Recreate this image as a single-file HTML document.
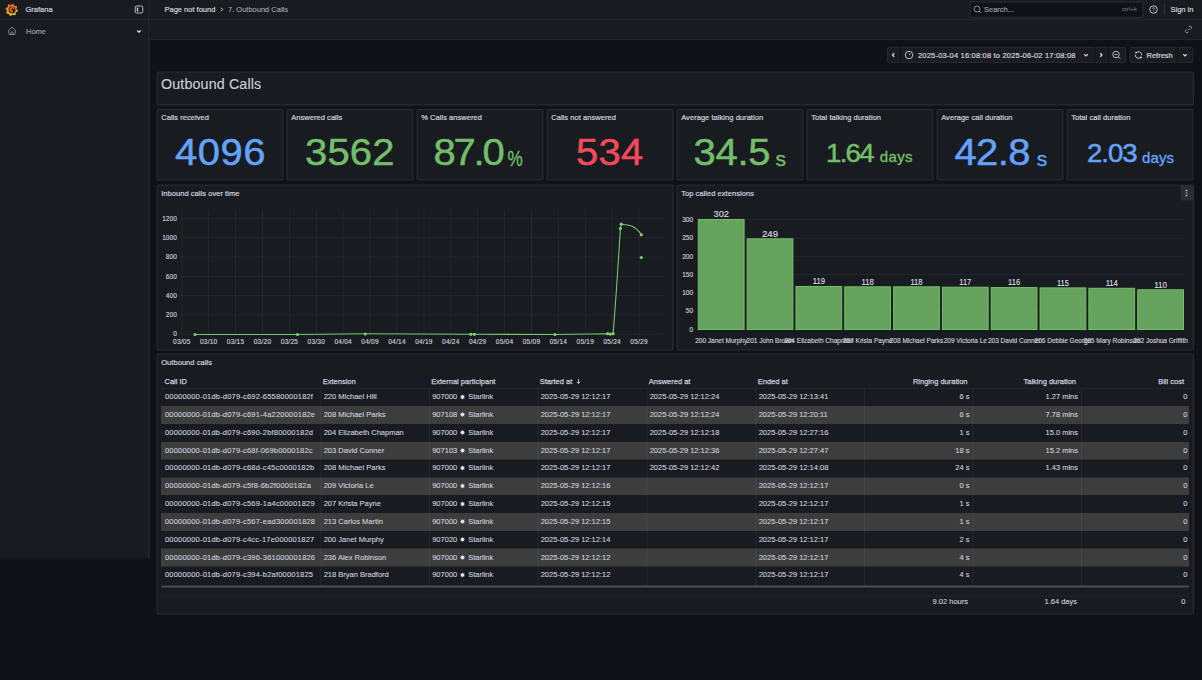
<!DOCTYPE html><html><head><meta charset="utf-8"><style>
html,body{margin:0;padding:0;width:1202px;height:680px;overflow:hidden;background:#111217;}
#root{position:absolute;left:0;top:0;width:2404px;height:1360px;transform:scale(0.5);transform-origin:0 0;background:#111217;font-family:"Liberation Sans",sans-serif;color:#ccccdc;font-size:15px;}
.a{position:absolute;}
.t{position:absolute;white-space:nowrap;line-height:1;}
.m{-webkit-text-stroke:0.45px currentColor;}
.panel{position:absolute;background:#181b1f;border:2px solid rgba(204,204,220,0.11);border-radius:4px;box-sizing:border-box;}
.ptitle{position:absolute;left:7px;top:7px;line-height:1;font-size:15px;color:#ccccdc;white-space:nowrap;-webkit-text-stroke:0.45px #ccccdc;letter-spacing:0.1px;}
.stat{position:absolute;left:0;right:0;text-align:center;white-space:nowrap;line-height:1;}
.td{position:absolute;white-space:nowrap;line-height:1;font-size:15px;color:#ccccdc;-webkit-text-stroke:0.25px #ccccdc;}
.th{position:absolute;white-space:nowrap;line-height:1;font-size:15px;color:#ccccdc;-webkit-text-stroke:0.5px #ccccdc;}
</style></head><body><div id="root">
<div class="a" style="left:0;top:0;width:297px;height:1117px;background:#181b1f;border-right:2px solid rgba(204,204,220,0.12);"></div>
<div class="a" style="left:0;top:38px;width:297px;height:2px;background:rgba(204,204,220,0.07);"></div>
<svg class="a" style="left:8px;top:4px" width="31" height="31" viewBox="0 0 28 28">
<defs><linearGradient id="lg" gradientUnits="userSpaceOnUse" x1="0" y1="3" x2="0" y2="25"><stop offset="0" stop-color="#f05a28"/><stop offset="0.5" stop-color="#f7901e"/><stop offset="1" stop-color="#fbe20a"/></linearGradient></defs>
<g fill="url(#lg)"><circle cx="14" cy="14" r="9"/><circle cx="15.85" cy="5.29" r="2.3"/><circle cx="21.46" cy="9.15" r="2.3"/><circle cx="22.71" cy="15.85" r="2.3"/><circle cx="18.85" cy="21.46" r="2.3"/><circle cx="12.15" cy="22.71" r="2.3"/><circle cx="6.54" cy="18.85" r="2.3"/><circle cx="5.29" cy="12.15" r="2.3"/><circle cx="9.15" cy="6.54" r="2.3"/></g>
<circle cx="14.5" cy="14.3" r="6.2" fill="#181b1f"/>
<path d="M18.4 12.4 A3.9 3.9 0 1 0 16.2 17.9" fill="none" stroke="#f3861f" stroke-width="1.9"/>
<path d="M13.6 13 A1.6 1.6 0 1 0 16 14.6" fill="none" stroke="#f07a22" stroke-width="1.5"/>
</svg>
<div class="t m" style="left:51px;top:10px;font-size:15px;color:#ccccdc;">Grafana</div>
<svg class="a" style="left:267px;top:8px" width="22" height="22" viewBox="0 0 22 22"><rect x="3.5" y="4" width="15" height="14" rx="2.5" fill="none" stroke="#ccccdc" stroke-width="1.8"/><rect x="6.5" y="7" width="3" height="8" rx="0.5" fill="#ccccdc"/></svg>
<svg class="a" style="left:13px;top:50px" width="22" height="22" viewBox="0 0 22 22"><path d="M4.5 10 L11 4.5 L17.5 10 V17 a2 2 0 0 1 -2 2 H6.5 a2 2 0 0 1 -2 -2 Z" fill="none" stroke="rgba(204,204,220,0.65)" stroke-width="1.8" stroke-linejoin="round"/><path d="M8.8 19 v-3.2 a2.2 2.2 0 0 1 4.4 0 v3.2" fill="none" stroke="rgba(204,204,220,0.65)" stroke-width="1.8"/></svg>
<div class="t m" style="left:52px;top:55px;font-size:15px;color:rgba(204,204,220,0.65);">Home</div>
<svg class="a" style="left:270px;top:55px" width="16" height="16" viewBox="0 0 16 16"><path d="M4.5 6 L8 9.5 L11.5 6" fill="none" stroke="#d8d8e4" stroke-width="2.4"/></svg>
<div class="a" style="left:299px;top:0;width:2105px;height:38px;background:#181b1f;border-bottom:2px solid rgba(204,204,220,0.07);"></div>
<div class="t m" style="left:329px;top:10px;font-size:15px;color:#ccccdc;">Page not found</div>
<svg class="a" style="left:437px;top:11px" width="14" height="16" viewBox="0 0 14 16"><path d="M5 4.5 L8.5 8 L5 11.5" fill="none" stroke="#ccccdc" stroke-width="2"/></svg>
<div class="t m" style="left:456px;top:10px;font-size:15px;color:rgba(204,204,220,0.65);">7. Outbound Calls</div>
<div class="a" style="left:1939px;top:3px;width:348px;height:33px;box-sizing:border-box;background:#111217;border:2px solid rgba(204,204,220,0.15);border-radius:4px;"></div>
<svg class="a" style="left:1944px;top:8px" width="22" height="22" viewBox="0 0 22 22"><circle cx="10" cy="10" r="6" fill="none" stroke="rgba(204,204,220,0.7)" stroke-width="1.8"/><path d="M14.3 14.3 L18 18" stroke="rgba(204,204,220,0.7)" stroke-width="1.8"/></svg>
<div class="t m" style="left:1968px;top:10px;font-size:15px;color:rgba(204,204,220,0.65);">Search...</div>
<div class="t" style="left:2244px;top:11px;font-size:12px;color:rgba(204,204,220,0.6);letter-spacing:0.2px;">ctrl+k</div>
<svg class="a" style="left:2296px;top:8px" width="22" height="22" viewBox="0 0 22 22"><circle cx="11" cy="11" r="7.5" fill="none" stroke="#ccccdc" stroke-width="1.8"/><path d="M9.2 9.2 a1.9 1.9 0 1 1 2.6 1.8 c-.5 .3 -.8 .6 -.8 1.2" fill="none" stroke="#ccccdc" stroke-width="1.4"/><circle cx="11" cy="14.2" r=".9" fill="#ccccdc"/></svg>
<div class="a" style="left:2328px;top:8px;width:2px;height:22px;background:rgba(204,204,220,0.15);"></div>
<div class="t m" style="left:2341px;top:10px;font-size:15px;color:#ccccdc;">Sign in</div>
<div class="a" style="left:299px;top:40px;width:2105px;height:40px;background:#181b1f;border-bottom:2px solid rgba(204,204,220,0.07);box-sizing:border-box;"></div>
<svg class="a" style="left:2366px;top:48px" width="22" height="22" viewBox="0 0 22 22"><path d="M9 13 L13 9" stroke="rgba(204,204,220,0.7)" stroke-width="1.8"/><path d="M10.5 6.5 l1.5-1.5 a3.2 3.2 0 0 1 4.5 4.5 l-1.5 1.5" fill="none" stroke="rgba(204,204,220,0.7)" stroke-width="1.8"/><path d="M11.5 15.5 l-1.5 1.5 a3.2 3.2 0 0 1 -4.5 -4.5 l1.5 -1.5" fill="none" stroke="rgba(204,204,220,0.7)" stroke-width="1.8"/></svg>
<div class="a" style="left:1774px;top:94px;width:478px;height:32px;box-sizing:border-box;background:#1a1c21;border:2px solid rgba(204,204,220,0.07);border-radius:4px;"></div>
<div class="a" style="left:1800px;top:94px;width:2px;height:32px;background:rgba(17,18,23,0.8);"></div>
<div class="a" style="left:2189px;top:94px;width:2px;height:32px;background:rgba(17,18,23,0.8);"></div>
<div class="a" style="left:2216px;top:94px;width:2px;height:32px;background:rgba(17,18,23,0.8);"></div>
<svg class="a" style="left:1779px;top:102px" width="16" height="16" viewBox="0 0 16 16"><path d="M9.5 4.5 L6 8 L9.5 11.5" fill="none" stroke="#d8d8e4" stroke-width="2.4"/></svg>
<svg class="a" style="left:1807px;top:99px" width="22" height="22" viewBox="0 0 22 22"><circle cx="11" cy="11" r="7.5" fill="none" stroke="#ccccdc" stroke-width="1.8"/><path d="M11 11 L13.5 8" fill="none" stroke="#ccccdc" stroke-width="2"/></svg>
<div class="t m" style="left:1836px;top:103px;font-size:15px;color:#ccccdc;letter-spacing:0.38px;">2025-03-04 16:08:08 to 2025-06-02 17:08:08</div>
<svg class="a" style="left:2164px;top:102px" width="16" height="16" viewBox="0 0 16 16"><path d="M4.5 6.5 L8 10 L11.5 6.5" fill="none" stroke="#d8d8e4" stroke-width="2.3"/></svg>
<svg class="a" style="left:2194px;top:102px" width="16" height="16" viewBox="0 0 16 16"><path d="M6.5 4.5 L10 8 L6.5 11.5" fill="none" stroke="#d8d8e4" stroke-width="2.4"/></svg>
<svg class="a" style="left:2222px;top:99px" width="22" height="22" viewBox="0 0 22 22"><circle cx="10" cy="10" r="6.5" fill="none" stroke="#ccccdc" stroke-width="1.8"/><path d="M7 10 H13" stroke="#ccccdc" stroke-width="1.8"/><path d="M15 15 L18.5 18.5" stroke="#ccccdc" stroke-width="1.8"/></svg>
<div class="a" style="left:2259px;top:94px;width:128px;height:32px;box-sizing:border-box;background:#1a1c21;border:2px solid rgba(204,204,220,0.07);border-radius:4px;"></div>
<div class="a" style="left:2354px;top:94px;width:2px;height:32px;background:rgba(17,18,23,0.8);"></div>
<svg class="a" style="left:2266px;top:99px" width="22" height="22" viewBox="0 0 22 22"><path d="M6.4 6.4 A6.5 6.5 0 0 1 17.5 11.5" fill="none" stroke="#ccccdc" stroke-width="1.9"/><path d="M15.6 15.6 A6.5 6.5 0 0 1 4.5 10.5" fill="none" stroke="#ccccdc" stroke-width="1.9"/><circle cx="6.2" cy="6.2" r="1.9" fill="#e0e0ea"/><circle cx="15.8" cy="15.8" r="1.9" fill="#e0e0ea"/></svg>
<div class="t m" style="left:2293px;top:103px;font-size:15px;color:#ccccdc;">Refresh</div>
<svg class="a" style="left:2362px;top:102px" width="16" height="16" viewBox="0 0 16 16"><path d="M4.5 6.5 L8 10 L11.5 6.5" fill="none" stroke="#d8d8e4" stroke-width="2.3"/></svg>
<div class="panel" style="left:313.4px;top:143px;width:2075px;height:68px;"></div>
<div class="t" style="left:322px;top:154px;font-size:28.5px;color:#ccccdc;letter-spacing:0.3px;-webkit-text-stroke:0.3px #ccccdc;">Outbound Calls</div>
<div class="panel" style="left:313.4px;top:218px;width:254px;height:143px;"><div class="ptitle">Calls received</div></div>
<div class="t" id="sv0" style="left:350.00px;top:268.43px;color:#64a2fb;font-size:74px;letter-spacing:0.93px;-webkit-text-stroke:1.0px #64a2fb;transform:scaleX(1.08);transform-origin:0 0;">4096</div>
<div class="panel" style="left:573.4px;top:218px;width:254px;height:143px;"><div class="ptitle">Answered calls</div></div>
<div class="t" id="sv1" style="left:610.00px;top:268.43px;color:#73bf69;font-size:74px;letter-spacing:0.33px;-webkit-text-stroke:1.0px #73bf69;transform:scaleX(1.08);transform-origin:0 0;">3562</div>
<div class="panel" style="left:833.4px;top:218px;width:254px;height:143px;"><div class="ptitle">% Calls answered</div></div>
<div class="t" id="sv2" style="left:867.40px;top:268.23px;color:#73bf69;font-size:74px;letter-spacing:-4.07px;-webkit-text-stroke:1.0px #73bf69;transform:scaleX(1.08);transform-origin:0 0;">87.0</div>
<div class="t" id="su2" style="left:1015.40px;top:295.38px;color:#73bf69;font-size:44px;letter-spacing:0.00px;-webkit-text-stroke:0.7px #73bf69;transform:scaleX(0.78);transform-origin:0 0;">%</div>
<div class="panel" style="left:1093.4px;top:218px;width:254px;height:143px;"><div class="ptitle">Calls not answered</div></div>
<div class="t" id="sv3" style="left:1152.40px;top:268.43px;color:#f2495c;font-size:74px;letter-spacing:0.40px;-webkit-text-stroke:1.0px #f2495c;transform:scaleX(1.08);transform-origin:0 0;">534</div>
<div class="panel" style="left:1353.4px;top:218px;width:254px;height:143px;"><div class="ptitle">Average talking duration</div></div>
<div class="t" id="sv4" style="left:1386.60px;top:268.43px;color:#73bf69;font-size:74px;letter-spacing:-0.47px;-webkit-text-stroke:1.0px #73bf69;transform:scaleX(1.08);transform-origin:0 0;">34.5</div>
<div class="t" id="su4" style="left:1551.00px;top:297.39px;color:#73bf69;font-size:42px;letter-spacing:0.00px;-webkit-text-stroke:0.7px #73bf69;">s</div>
<div class="panel" style="left:1613.4px;top:218px;width:254px;height:143px;"><div class="ptitle">Total talking duration</div></div>
<div class="t" id="sv5" style="left:1652.20px;top:279.64px;color:#73bf69;font-size:51px;letter-spacing:-3.13px;-webkit-text-stroke:1.0px #73bf69;transform:scaleX(1.08);transform-origin:0 0;">1.64</div>
<div class="t" id="su5" style="left:1759.40px;top:298.65px;color:#73bf69;font-size:30px;letter-spacing:0.80px;-webkit-text-stroke:0.7px #73bf69;">days</div>
<div class="panel" style="left:1873.4px;top:218px;width:254px;height:143px;"><div class="ptitle">Average call duration</div></div>
<div class="t" id="sv6" style="left:1908.60px;top:268.43px;color:#64a2fb;font-size:74px;letter-spacing:-1.13px;-webkit-text-stroke:1.0px #64a2fb;transform:scaleX(1.08);transform-origin:0 0;">42.8</div>
<div class="t" id="su6" style="left:2073.60px;top:297.39px;color:#64a2fb;font-size:42px;letter-spacing:0.00px;-webkit-text-stroke:0.7px #64a2fb;">s</div>
<div class="panel" style="left:2133.4px;top:218px;width:254px;height:143px;"><div class="ptitle">Total call duration</div></div>
<div class="t" id="sv7" style="left:2174.20px;top:280.85px;color:#64a2fb;font-size:51px;letter-spacing:-1.87px;-webkit-text-stroke:1.0px #64a2fb;transform:scaleX(1.08);transform-origin:0 0;">2.03</div>
<div class="t" id="su7" style="left:2284.20px;top:299.85px;color:#64a2fb;font-size:30px;letter-spacing:0.20px;-webkit-text-stroke:0.7px #64a2fb;">days</div>
<div class="panel" style="left:313.4px;top:369px;width:1034px;height:332px;"><div class="ptitle">Inbound calls over time</div></div>
<div class="panel" style="left:1353.4px;top:369px;width:1035px;height:332px;"><div class="ptitle">Top called extensions</div></div>
<div class="a" style="left:2361px;top:370px;width:25px;height:31px;background:#2b2d32;border-radius:3px;"></div>
<svg class="a" style="left:2365px;top:376px" width="16" height="20" viewBox="0 0 16 20"><rect x="6.5" y="3.5" width="3" height="3" fill="#ccccdc"/><rect x="6.5" y="8.5" width="3" height="3" fill="#8e8e99"/><rect x="6.5" y="13.5" width="3" height="3" fill="#ccccdc"/></svg>
<div class="panel" style="left:313.4px;top:707px;width:2075px;height:522px;"><div class="ptitle">Outbound calls</div></div>
<div class="th" style="left:329px;top:754.5px;">Call ID</div>
<div class="th" style="left:645.5px;top:754.5px;">Extension</div>
<div class="th" style="left:862.5px;top:754.5px;">External participant</div>
<div class="th" style="left:1079.5px;top:754.5px;">Started at<svg width="14" height="14" viewBox="0 0 14 14" style="vertical-align:-2px;margin-left:5px"><path d="M7 2 V11 M3.5 7.5 L7 11 L10.5 7.5" fill="none" stroke="#ccccdc" stroke-width="1.8"/></svg></div>
<div class="th" style="left:1297.5px;top:754.5px;">Answered at</div>
<div class="th" style="left:1515.5px;top:754.5px;">Ended at</div>
<div class="th" style="left:1728px;width:207px;text-align:right;top:754.5px;">Ringing duration</div>
<div class="th" style="left:1945px;width:207px;text-align:right;top:754.5px;">Talking duration</div>
<div class="th" style="left:2162px;width:206px;text-align:right;top:754.5px;">Bill cost</div>
<div class="a" style="left:322px;top:776px;width:2056px;height:1px;background:rgba(204,204,220,0.12);"></div>
<div class="td" style="left:330px;top:784.7px;letter-spacing:0.4px;">00000000-01db-d079-c692-65580000182f</div>
<div class="td" style="left:647.4px;top:784.7px;">220 Michael Hill</div>
<div class="td" style="left:864.4px;top:784.7px;">907000<span style="display:inline-block;position:relative;width:10px;height:10px;margin:0 6px 0 6px;"><svg width="14" height="14" viewBox="0 0 16 16" style="position:absolute;left:-2px;top:-1px"><path d="M8 1.5 L9.3 5 L12.6 3.4 L11 6.7 L14.5 8 L11 9.3 L12.6 12.6 L9.3 11 L8 14.5 L6.7 11 L3.4 12.6 L5 9.3 L1.5 8 L5 6.7 L3.4 3.4 L6.7 5 Z" fill="#e8e8f0"/></svg></span>Starlink</div>
<div class="td" style="left:1081.4px;top:784.7px;">2025-05-29 12:12:17</div>
<div class="td" style="left:1299.4px;top:784.7px;">2025-05-29 12:12:24</div>
<div class="td" style="left:1517.4px;top:784.7px;">2025-05-29 12:13:41</div>
<div class="td" style="left:1728px;width:211px;text-align:right;top:784.7px;">6 s</div>
<div class="td" style="left:1945px;width:211px;text-align:right;top:784.7px;">1.27 mins</div>
<div class="td" style="left:2162px;width:213px;text-align:right;top:784.7px;">0</div>
<div class="a" style="left:322px;top:812.25px;width:2056px;height:35.65px;background:#3d3d3e;"></div>
<div class="td" style="left:330px;top:820.4px;letter-spacing:0.4px;">00000000-01db-d079-c691-4a220000182e</div>
<div class="td" style="left:647.4px;top:820.4px;">208 Michael Parks</div>
<div class="td" style="left:864.4px;top:820.4px;">907108<span style="display:inline-block;position:relative;width:10px;height:10px;margin:0 6px 0 6px;"><svg width="14" height="14" viewBox="0 0 16 16" style="position:absolute;left:-2px;top:-1px"><path d="M8 1.5 L9.3 5 L12.6 3.4 L11 6.7 L14.5 8 L11 9.3 L12.6 12.6 L9.3 11 L8 14.5 L6.7 11 L3.4 12.6 L5 9.3 L1.5 8 L5 6.7 L3.4 3.4 L6.7 5 Z" fill="#e8e8f0"/></svg></span>Starlink</div>
<div class="td" style="left:1081.4px;top:820.4px;">2025-05-29 12:12:17</div>
<div class="td" style="left:1299.4px;top:820.4px;">2025-05-29 12:12:24</div>
<div class="td" style="left:1517.4px;top:820.4px;">2025-05-29 12:20:11</div>
<div class="td" style="left:1728px;width:211px;text-align:right;top:820.4px;">6 s</div>
<div class="td" style="left:1945px;width:211px;text-align:right;top:820.4px;">7.78 mins</div>
<div class="td" style="left:2162px;width:213px;text-align:right;top:820.4px;">0</div>
<div class="td" style="left:330px;top:856.0px;letter-spacing:0.4px;">00000000-01db-d079-c690-2bf80000182d</div>
<div class="td" style="left:647.4px;top:856.0px;">204 Elizabeth Chapman</div>
<div class="td" style="left:864.4px;top:856.0px;">907000<span style="display:inline-block;position:relative;width:10px;height:10px;margin:0 6px 0 6px;"><svg width="14" height="14" viewBox="0 0 16 16" style="position:absolute;left:-2px;top:-1px"><path d="M8 1.5 L9.3 5 L12.6 3.4 L11 6.7 L14.5 8 L11 9.3 L12.6 12.6 L9.3 11 L8 14.5 L6.7 11 L3.4 12.6 L5 9.3 L1.5 8 L5 6.7 L3.4 3.4 L6.7 5 Z" fill="#e8e8f0"/></svg></span>Starlink</div>
<div class="td" style="left:1081.4px;top:856.0px;">2025-05-29 12:12:17</div>
<div class="td" style="left:1299.4px;top:856.0px;">2025-05-29 12:12:18</div>
<div class="td" style="left:1517.4px;top:856.0px;">2025-05-29 12:27:16</div>
<div class="td" style="left:1728px;width:211px;text-align:right;top:856.0px;">1 s</div>
<div class="td" style="left:1945px;width:211px;text-align:right;top:856.0px;">15.0 mins</div>
<div class="td" style="left:2162px;width:213px;text-align:right;top:856.0px;">0</div>
<div class="a" style="left:322px;top:883.55px;width:2056px;height:35.65px;background:#3d3d3e;"></div>
<div class="td" style="left:330px;top:891.6px;letter-spacing:0.4px;">00000000-01db-d079-c68f-069b0000182c</div>
<div class="td" style="left:647.4px;top:891.6px;">203 David Conner</div>
<div class="td" style="left:864.4px;top:891.6px;">907103<span style="display:inline-block;position:relative;width:10px;height:10px;margin:0 6px 0 6px;"><svg width="14" height="14" viewBox="0 0 16 16" style="position:absolute;left:-2px;top:-1px"><path d="M8 1.5 L9.3 5 L12.6 3.4 L11 6.7 L14.5 8 L11 9.3 L12.6 12.6 L9.3 11 L8 14.5 L6.7 11 L3.4 12.6 L5 9.3 L1.5 8 L5 6.7 L3.4 3.4 L6.7 5 Z" fill="#e8e8f0"/></svg></span>Starlink</div>
<div class="td" style="left:1081.4px;top:891.6px;">2025-05-29 12:12:17</div>
<div class="td" style="left:1299.4px;top:891.6px;">2025-05-29 12:12:36</div>
<div class="td" style="left:1517.4px;top:891.6px;">2025-05-29 12:27:47</div>
<div class="td" style="left:1728px;width:211px;text-align:right;top:891.6px;">18 s</div>
<div class="td" style="left:1945px;width:211px;text-align:right;top:891.6px;">15.2 mins</div>
<div class="td" style="left:2162px;width:213px;text-align:right;top:891.6px;">0</div>
<div class="td" style="left:330px;top:927.3px;letter-spacing:0.4px;">00000000-01db-d079-c68d-c45c0000182b</div>
<div class="td" style="left:647.4px;top:927.3px;">208 Michael Parks</div>
<div class="td" style="left:864.4px;top:927.3px;">907000<span style="display:inline-block;position:relative;width:10px;height:10px;margin:0 6px 0 6px;"><svg width="14" height="14" viewBox="0 0 16 16" style="position:absolute;left:-2px;top:-1px"><path d="M8 1.5 L9.3 5 L12.6 3.4 L11 6.7 L14.5 8 L11 9.3 L12.6 12.6 L9.3 11 L8 14.5 L6.7 11 L3.4 12.6 L5 9.3 L1.5 8 L5 6.7 L3.4 3.4 L6.7 5 Z" fill="#e8e8f0"/></svg></span>Starlink</div>
<div class="td" style="left:1081.4px;top:927.3px;">2025-05-29 12:12:17</div>
<div class="td" style="left:1299.4px;top:927.3px;">2025-05-29 12:12:42</div>
<div class="td" style="left:1517.4px;top:927.3px;">2025-05-29 12:14:08</div>
<div class="td" style="left:1728px;width:211px;text-align:right;top:927.3px;">24 s</div>
<div class="td" style="left:1945px;width:211px;text-align:right;top:927.3px;">1.43 mins</div>
<div class="td" style="left:2162px;width:213px;text-align:right;top:927.3px;">0</div>
<div class="a" style="left:322px;top:954.85px;width:2056px;height:35.65px;background:#3d3d3e;"></div>
<div class="td" style="left:330px;top:963.0px;letter-spacing:0.4px;">00000000-01db-d079-c5f8-6b2f0000182a</div>
<div class="td" style="left:647.4px;top:963.0px;">209 Victoria Le</div>
<div class="td" style="left:864.4px;top:963.0px;">907000<span style="display:inline-block;position:relative;width:10px;height:10px;margin:0 6px 0 6px;"><svg width="14" height="14" viewBox="0 0 16 16" style="position:absolute;left:-2px;top:-1px"><path d="M8 1.5 L9.3 5 L12.6 3.4 L11 6.7 L14.5 8 L11 9.3 L12.6 12.6 L9.3 11 L8 14.5 L6.7 11 L3.4 12.6 L5 9.3 L1.5 8 L5 6.7 L3.4 3.4 L6.7 5 Z" fill="#e8e8f0"/></svg></span>Starlink</div>
<div class="td" style="left:1081.4px;top:963.0px;">2025-05-29 12:12:16</div>
<div class="td" style="left:1299.4px;top:963.0px;"></div>
<div class="td" style="left:1517.4px;top:963.0px;">2025-05-29 12:12:17</div>
<div class="td" style="left:1728px;width:211px;text-align:right;top:963.0px;">0 s</div>
<div class="td" style="left:1945px;width:211px;text-align:right;top:963.0px;"></div>
<div class="td" style="left:2162px;width:213px;text-align:right;top:963.0px;">0</div>
<div class="td" style="left:330px;top:998.6px;letter-spacing:0.4px;">00000000-01db-d079-c569-1a4c00001829</div>
<div class="td" style="left:647.4px;top:998.6px;">207 Krista Payne</div>
<div class="td" style="left:864.4px;top:998.6px;">907000<span style="display:inline-block;position:relative;width:10px;height:10px;margin:0 6px 0 6px;"><svg width="14" height="14" viewBox="0 0 16 16" style="position:absolute;left:-2px;top:-1px"><path d="M8 1.5 L9.3 5 L12.6 3.4 L11 6.7 L14.5 8 L11 9.3 L12.6 12.6 L9.3 11 L8 14.5 L6.7 11 L3.4 12.6 L5 9.3 L1.5 8 L5 6.7 L3.4 3.4 L6.7 5 Z" fill="#e8e8f0"/></svg></span>Starlink</div>
<div class="td" style="left:1081.4px;top:998.6px;">2025-05-29 12:12:15</div>
<div class="td" style="left:1299.4px;top:998.6px;"></div>
<div class="td" style="left:1517.4px;top:998.6px;">2025-05-29 12:12:17</div>
<div class="td" style="left:1728px;width:211px;text-align:right;top:998.6px;">1 s</div>
<div class="td" style="left:1945px;width:211px;text-align:right;top:998.6px;"></div>
<div class="td" style="left:2162px;width:213px;text-align:right;top:998.6px;">0</div>
<div class="a" style="left:322px;top:1026.15px;width:2056px;height:35.65px;background:#3d3d3e;"></div>
<div class="td" style="left:330px;top:1034.2px;letter-spacing:0.4px;">00000000-01db-d079-c567-ead300001828</div>
<div class="td" style="left:647.4px;top:1034.2px;">213 Carlos Martin</div>
<div class="td" style="left:864.4px;top:1034.2px;">907000<span style="display:inline-block;position:relative;width:10px;height:10px;margin:0 6px 0 6px;"><svg width="14" height="14" viewBox="0 0 16 16" style="position:absolute;left:-2px;top:-1px"><path d="M8 1.5 L9.3 5 L12.6 3.4 L11 6.7 L14.5 8 L11 9.3 L12.6 12.6 L9.3 11 L8 14.5 L6.7 11 L3.4 12.6 L5 9.3 L1.5 8 L5 6.7 L3.4 3.4 L6.7 5 Z" fill="#e8e8f0"/></svg></span>Starlink</div>
<div class="td" style="left:1081.4px;top:1034.2px;">2025-05-29 12:12:15</div>
<div class="td" style="left:1299.4px;top:1034.2px;"></div>
<div class="td" style="left:1517.4px;top:1034.2px;">2025-05-29 12:12:17</div>
<div class="td" style="left:1728px;width:211px;text-align:right;top:1034.2px;">1 s</div>
<div class="td" style="left:1945px;width:211px;text-align:right;top:1034.2px;"></div>
<div class="td" style="left:2162px;width:213px;text-align:right;top:1034.2px;">0</div>
<div class="td" style="left:330px;top:1069.9px;letter-spacing:0.4px;">00000000-01db-d079-c4cc-17e000001827</div>
<div class="td" style="left:647.4px;top:1069.9px;">200 Janet Murphy</div>
<div class="td" style="left:864.4px;top:1069.9px;">907020<span style="display:inline-block;position:relative;width:10px;height:10px;margin:0 6px 0 6px;"><svg width="14" height="14" viewBox="0 0 16 16" style="position:absolute;left:-2px;top:-1px"><path d="M8 1.5 L9.3 5 L12.6 3.4 L11 6.7 L14.5 8 L11 9.3 L12.6 12.6 L9.3 11 L8 14.5 L6.7 11 L3.4 12.6 L5 9.3 L1.5 8 L5 6.7 L3.4 3.4 L6.7 5 Z" fill="#e8e8f0"/></svg></span>Starlink</div>
<div class="td" style="left:1081.4px;top:1069.9px;">2025-05-29 12:12:14</div>
<div class="td" style="left:1299.4px;top:1069.9px;"></div>
<div class="td" style="left:1517.4px;top:1069.9px;">2025-05-29 12:12:17</div>
<div class="td" style="left:1728px;width:211px;text-align:right;top:1069.9px;">2 s</div>
<div class="td" style="left:1945px;width:211px;text-align:right;top:1069.9px;"></div>
<div class="td" style="left:2162px;width:213px;text-align:right;top:1069.9px;">0</div>
<div class="a" style="left:322px;top:1097.45px;width:2056px;height:35.65px;background:#3d3d3e;"></div>
<div class="td" style="left:330px;top:1105.5px;letter-spacing:0.4px;">00000000-01db-d079-c396-361000001826</div>
<div class="td" style="left:647.4px;top:1105.5px;">236 Alex Robinson</div>
<div class="td" style="left:864.4px;top:1105.5px;">907000<span style="display:inline-block;position:relative;width:10px;height:10px;margin:0 6px 0 6px;"><svg width="14" height="14" viewBox="0 0 16 16" style="position:absolute;left:-2px;top:-1px"><path d="M8 1.5 L9.3 5 L12.6 3.4 L11 6.7 L14.5 8 L11 9.3 L12.6 12.6 L9.3 11 L8 14.5 L6.7 11 L3.4 12.6 L5 9.3 L1.5 8 L5 6.7 L3.4 3.4 L6.7 5 Z" fill="#e8e8f0"/></svg></span>Starlink</div>
<div class="td" style="left:1081.4px;top:1105.5px;">2025-05-29 12:12:12</div>
<div class="td" style="left:1299.4px;top:1105.5px;"></div>
<div class="td" style="left:1517.4px;top:1105.5px;">2025-05-29 12:12:17</div>
<div class="td" style="left:1728px;width:211px;text-align:right;top:1105.5px;">4 s</div>
<div class="td" style="left:1945px;width:211px;text-align:right;top:1105.5px;"></div>
<div class="td" style="left:2162px;width:213px;text-align:right;top:1105.5px;">0</div>
<div class="td" style="left:330px;top:1141.2px;letter-spacing:0.4px;">00000000-01db-d079-c394-b2af00001825</div>
<div class="td" style="left:647.4px;top:1141.2px;">218 Bryan Bradford</div>
<div class="td" style="left:864.4px;top:1141.2px;">907000<span style="display:inline-block;position:relative;width:10px;height:10px;margin:0 6px 0 6px;"><svg width="14" height="14" viewBox="0 0 16 16" style="position:absolute;left:-2px;top:-1px"><path d="M8 1.5 L9.3 5 L12.6 3.4 L11 6.7 L14.5 8 L11 9.3 L12.6 12.6 L9.3 11 L8 14.5 L6.7 11 L3.4 12.6 L5 9.3 L1.5 8 L5 6.7 L3.4 3.4 L6.7 5 Z" fill="#e8e8f0"/></svg></span>Starlink</div>
<div class="td" style="left:1081.4px;top:1141.2px;">2025-05-29 12:12:12</div>
<div class="td" style="left:1299.4px;top:1141.2px;"></div>
<div class="td" style="left:1517.4px;top:1141.2px;">2025-05-29 12:12:17</div>
<div class="td" style="left:1728px;width:211px;text-align:right;top:1141.2px;">4 s</div>
<div class="td" style="left:1945px;width:211px;text-align:right;top:1141.2px;"></div>
<div class="td" style="left:2162px;width:213px;text-align:right;top:1141.2px;">0</div>
<div class="a" style="left:641px;top:776px;width:1.5px;height:400px;background:rgba(204,204,220,0.07);"></div>
<div class="a" style="left:858px;top:776px;width:1.5px;height:400px;background:rgba(204,204,220,0.07);"></div>
<div class="a" style="left:1075px;top:776px;width:1.5px;height:400px;background:rgba(204,204,220,0.07);"></div>
<div class="a" style="left:1293px;top:776px;width:1.5px;height:400px;background:rgba(204,204,220,0.07);"></div>
<div class="a" style="left:1511px;top:776px;width:1.5px;height:400px;background:rgba(204,204,220,0.07);"></div>
<div class="a" style="left:1728px;top:776px;width:1.5px;height:400px;background:rgba(204,204,220,0.07);"></div>
<div class="a" style="left:1945px;top:776px;width:1.5px;height:400px;background:rgba(204,204,220,0.07);"></div>
<div class="a" style="left:2162px;top:776px;width:1.5px;height:400px;background:rgba(204,204,220,0.07);"></div>
<div class="a" style="left:322px;top:1170.5px;width:2056px;height:4.5px;background:#4b4c50;border-radius:2px;"></div>
<div class="a" style="left:322px;top:1190.7px;width:2056px;height:2px;background:rgba(204,204,220,0.07);"></div>
<div class="td" style="left:1636px;width:300px;text-align:right;top:1195px;">9.02 hours</div>
<div class="td" style="left:1854px;width:300px;text-align:right;top:1195px;">1.64 days</div>
<div class="td" style="left:2071px;width:300px;text-align:right;top:1195px;">0</div>
<svg class="a" style="left:0;top:0" width="2404" height="1360" viewBox="0 0 2404 1360" font-family="Liberation Sans, sans-serif">
<line x1="361" y1="668.4" x2="1327.6" y2="668.4" stroke="rgba(204,204,220,0.09)" stroke-width="1.6"/>
<text x="354" y="672.9" text-anchor="end" font-size="13" letter-spacing="0.2" fill="#ccccdc" stroke="#ccccdc" stroke-width="0.3">0</text>
<line x1="361" y1="629.8" x2="1327.6" y2="629.8" stroke="rgba(204,204,220,0.09)" stroke-width="1.6"/>
<text x="354" y="634.3" text-anchor="end" font-size="13" letter-spacing="0.2" fill="#ccccdc" stroke="#ccccdc" stroke-width="0.3">200</text>
<line x1="361" y1="591.2" x2="1327.6" y2="591.2" stroke="rgba(204,204,220,0.09)" stroke-width="1.6"/>
<text x="354" y="595.7" text-anchor="end" font-size="13" letter-spacing="0.2" fill="#ccccdc" stroke="#ccccdc" stroke-width="0.3">400</text>
<line x1="361" y1="552.6" x2="1327.6" y2="552.6" stroke="rgba(204,204,220,0.09)" stroke-width="1.6"/>
<text x="354" y="557.1" text-anchor="end" font-size="13" letter-spacing="0.2" fill="#ccccdc" stroke="#ccccdc" stroke-width="0.3">600</text>
<line x1="361" y1="514.0" x2="1327.6" y2="514.0" stroke="rgba(204,204,220,0.09)" stroke-width="1.6"/>
<text x="354" y="518.5" text-anchor="end" font-size="13" letter-spacing="0.2" fill="#ccccdc" stroke="#ccccdc" stroke-width="0.3">800</text>
<line x1="361" y1="475.4" x2="1327.6" y2="475.4" stroke="rgba(204,204,220,0.09)" stroke-width="1.6"/>
<text x="354" y="479.9" text-anchor="end" font-size="13" letter-spacing="0.2" fill="#ccccdc" stroke="#ccccdc" stroke-width="0.3">1000</text>
<line x1="361" y1="436.8" x2="1327.6" y2="436.8" stroke="rgba(204,204,220,0.09)" stroke-width="1.6"/>
<text x="354" y="441.3" text-anchor="end" font-size="13" letter-spacing="0.2" fill="#ccccdc" stroke="#ccccdc" stroke-width="0.3">1200</text>
<line x1="363.6" y1="419.8" x2="363.6" y2="668.4" stroke="rgba(204,204,220,0.09)" stroke-width="1.6"/>
<text x="363.6" y="688" text-anchor="middle" font-size="13" letter-spacing="0.5" fill="#ccccdc" stroke="#ccccdc" stroke-width="0.3">03/05</text>
<line x1="417.4" y1="419.8" x2="417.4" y2="668.4" stroke="rgba(204,204,220,0.09)" stroke-width="1.6"/>
<text x="417.4" y="688" text-anchor="middle" font-size="13" letter-spacing="0.5" fill="#ccccdc" stroke="#ccccdc" stroke-width="0.3">03/10</text>
<line x1="471.2" y1="419.8" x2="471.2" y2="668.4" stroke="rgba(204,204,220,0.09)" stroke-width="1.6"/>
<text x="471.2" y="688" text-anchor="middle" font-size="13" letter-spacing="0.5" fill="#ccccdc" stroke="#ccccdc" stroke-width="0.3">03/15</text>
<line x1="525.0" y1="419.8" x2="525.0" y2="668.4" stroke="rgba(204,204,220,0.09)" stroke-width="1.6"/>
<text x="525.0" y="688" text-anchor="middle" font-size="13" letter-spacing="0.5" fill="#ccccdc" stroke="#ccccdc" stroke-width="0.3">03/20</text>
<line x1="578.8" y1="419.8" x2="578.8" y2="668.4" stroke="rgba(204,204,220,0.09)" stroke-width="1.6"/>
<text x="578.8" y="688" text-anchor="middle" font-size="13" letter-spacing="0.5" fill="#ccccdc" stroke="#ccccdc" stroke-width="0.3">03/25</text>
<line x1="632.6" y1="419.8" x2="632.6" y2="668.4" stroke="rgba(204,204,220,0.09)" stroke-width="1.6"/>
<text x="632.6" y="688" text-anchor="middle" font-size="13" letter-spacing="0.5" fill="#ccccdc" stroke="#ccccdc" stroke-width="0.3">03/30</text>
<line x1="686.4" y1="419.8" x2="686.4" y2="668.4" stroke="rgba(204,204,220,0.09)" stroke-width="1.6"/>
<text x="686.4" y="688" text-anchor="middle" font-size="13" letter-spacing="0.5" fill="#ccccdc" stroke="#ccccdc" stroke-width="0.3">04/04</text>
<line x1="740.2" y1="419.8" x2="740.2" y2="668.4" stroke="rgba(204,204,220,0.09)" stroke-width="1.6"/>
<text x="740.2" y="688" text-anchor="middle" font-size="13" letter-spacing="0.5" fill="#ccccdc" stroke="#ccccdc" stroke-width="0.3">04/09</text>
<line x1="794.0" y1="419.8" x2="794.0" y2="668.4" stroke="rgba(204,204,220,0.09)" stroke-width="1.6"/>
<text x="794.0" y="688" text-anchor="middle" font-size="13" letter-spacing="0.5" fill="#ccccdc" stroke="#ccccdc" stroke-width="0.3">04/14</text>
<line x1="847.8" y1="419.8" x2="847.8" y2="668.4" stroke="rgba(204,204,220,0.09)" stroke-width="1.6"/>
<text x="847.8" y="688" text-anchor="middle" font-size="13" letter-spacing="0.5" fill="#ccccdc" stroke="#ccccdc" stroke-width="0.3">04/19</text>
<line x1="901.6" y1="419.8" x2="901.6" y2="668.4" stroke="rgba(204,204,220,0.09)" stroke-width="1.6"/>
<text x="901.6" y="688" text-anchor="middle" font-size="13" letter-spacing="0.5" fill="#ccccdc" stroke="#ccccdc" stroke-width="0.3">04/24</text>
<line x1="955.4" y1="419.8" x2="955.4" y2="668.4" stroke="rgba(204,204,220,0.09)" stroke-width="1.6"/>
<text x="955.4" y="688" text-anchor="middle" font-size="13" letter-spacing="0.5" fill="#ccccdc" stroke="#ccccdc" stroke-width="0.3">04/29</text>
<line x1="1009.2" y1="419.8" x2="1009.2" y2="668.4" stroke="rgba(204,204,220,0.09)" stroke-width="1.6"/>
<text x="1009.2" y="688" text-anchor="middle" font-size="13" letter-spacing="0.5" fill="#ccccdc" stroke="#ccccdc" stroke-width="0.3">05/04</text>
<line x1="1063.0" y1="419.8" x2="1063.0" y2="668.4" stroke="rgba(204,204,220,0.09)" stroke-width="1.6"/>
<text x="1063.0" y="688" text-anchor="middle" font-size="13" letter-spacing="0.5" fill="#ccccdc" stroke="#ccccdc" stroke-width="0.3">05/09</text>
<line x1="1116.8" y1="419.8" x2="1116.8" y2="668.4" stroke="rgba(204,204,220,0.09)" stroke-width="1.6"/>
<text x="1116.8" y="688" text-anchor="middle" font-size="13" letter-spacing="0.5" fill="#ccccdc" stroke="#ccccdc" stroke-width="0.3">05/14</text>
<line x1="1170.6" y1="419.8" x2="1170.6" y2="668.4" stroke="rgba(204,204,220,0.09)" stroke-width="1.6"/>
<text x="1170.6" y="688" text-anchor="middle" font-size="13" letter-spacing="0.5" fill="#ccccdc" stroke="#ccccdc" stroke-width="0.3">05/19</text>
<line x1="1224.4" y1="419.8" x2="1224.4" y2="668.4" stroke="rgba(204,204,220,0.09)" stroke-width="1.6"/>
<text x="1224.4" y="688" text-anchor="middle" font-size="13" letter-spacing="0.5" fill="#ccccdc" stroke="#ccccdc" stroke-width="0.3">05/24</text>
<line x1="1278.2" y1="419.8" x2="1278.2" y2="668.4" stroke="rgba(204,204,220,0.09)" stroke-width="1.6"/>
<text x="1278.2" y="688" text-anchor="middle" font-size="13" letter-spacing="0.5" fill="#ccccdc" stroke="#ccccdc" stroke-width="0.3">05/29</text>
<path d="M390 669 L595 669 L730.6 667.6 L941.6 668.6 L948.6 668.6 L1110 669 L1215.2 667.6 L1220.6 668.2 L1226.2 667.6 C1232 600 1238 500 1240.8 457.2 L1242.6 448.4 C1258 449 1272 452 1282.6 469.6" fill="none" stroke="#79c76f" stroke-width="2.2"/>
<circle cx="390" cy="669" r="3.2" fill="#7dd072"/>
<circle cx="595" cy="669" r="3.2" fill="#7dd072"/>
<circle cx="730.6" cy="668" r="3.2" fill="#7dd072"/>
<circle cx="941.6" cy="668.6" r="3.2" fill="#7dd072"/>
<circle cx="948.6" cy="668.6" r="3.2" fill="#7dd072"/>
<circle cx="1110" cy="669" r="3.2" fill="#7dd072"/>
<circle cx="1215.2" cy="667.4" r="3.2" fill="#7dd072"/>
<circle cx="1220.6" cy="668.2" r="3.2" fill="#7dd072"/>
<circle cx="1226.2" cy="667.4" r="3.2" fill="#7dd072"/>
<circle cx="1240.8" cy="457.2" r="3.2" fill="#7dd072"/>
<circle cx="1242.6" cy="448.4" r="3.2" fill="#7dd072"/>
<circle cx="1282.6" cy="469.6" r="3.2" fill="#7dd072"/>
<circle cx="1282.6" cy="515" r="3.2" fill="#7dd072"/>
<line x1="1393" y1="659.0" x2="2368" y2="659.0" stroke="rgba(204,204,220,0.09)" stroke-width="1.6"/>
<text x="1386.6" y="663.5" text-anchor="end" font-size="13" letter-spacing="0.2" fill="#ccccdc" stroke="#ccccdc" stroke-width="0.3">0</text>
<line x1="1393" y1="622.4" x2="2368" y2="622.4" stroke="rgba(204,204,220,0.09)" stroke-width="1.6"/>
<text x="1386.6" y="626.9" text-anchor="end" font-size="13" letter-spacing="0.2" fill="#ccccdc" stroke="#ccccdc" stroke-width="0.3">50</text>
<line x1="1393" y1="585.8" x2="2368" y2="585.8" stroke="rgba(204,204,220,0.09)" stroke-width="1.6"/>
<text x="1386.6" y="590.3" text-anchor="end" font-size="13" letter-spacing="0.2" fill="#ccccdc" stroke="#ccccdc" stroke-width="0.3">100</text>
<line x1="1393" y1="549.2" x2="2368" y2="549.2" stroke="rgba(204,204,220,0.09)" stroke-width="1.6"/>
<text x="1386.6" y="553.7" text-anchor="end" font-size="13" letter-spacing="0.2" fill="#ccccdc" stroke="#ccccdc" stroke-width="0.3">150</text>
<line x1="1393" y1="512.6" x2="2368" y2="512.6" stroke="rgba(204,204,220,0.09)" stroke-width="1.6"/>
<text x="1386.6" y="517.1" text-anchor="end" font-size="13" letter-spacing="0.2" fill="#ccccdc" stroke="#ccccdc" stroke-width="0.3">200</text>
<line x1="1393" y1="476.0" x2="2368" y2="476.0" stroke="rgba(204,204,220,0.09)" stroke-width="1.6"/>
<text x="1386.6" y="480.5" text-anchor="end" font-size="13" letter-spacing="0.2" fill="#ccccdc" stroke="#ccccdc" stroke-width="0.3">250</text>
<line x1="1393" y1="439.4" x2="2368" y2="439.4" stroke="rgba(204,204,220,0.09)" stroke-width="1.6"/>
<text x="1386.6" y="443.9" text-anchor="end" font-size="13" letter-spacing="0.2" fill="#ccccdc" stroke="#ccccdc" stroke-width="0.3">300</text>
<rect x="1396.6" y="438.9" width="91.6" height="220.1" fill="#65a25d" stroke="#73bf69" stroke-width="2"/>
<text x="1442.4" y="434.4" text-anchor="middle" font-size="18" textLength="30.7" lengthAdjust="spacingAndGlyphs" fill="#d8d8e4" stroke="#d8d8e4" stroke-width="0.3">302</text>
<text x="1442.4" y="685" text-anchor="middle" font-size="13" fill="#ccccdc" stroke="#ccccdc" stroke-width="0.3">200 Janet Murphy</text>
<rect x="1494.2" y="477.7" width="91.6" height="181.3" fill="#65a25d" stroke="#73bf69" stroke-width="2"/>
<text x="1540.1" y="473.2" text-anchor="middle" font-size="18" textLength="32.4" lengthAdjust="spacingAndGlyphs" fill="#d8d8e4" stroke="#d8d8e4" stroke-width="0.3">249</text>
<text x="1540.1" y="685" text-anchor="middle" font-size="13" fill="#ccccdc" stroke="#ccccdc" stroke-width="0.3">201 John Brown</text>
<rect x="1591.9" y="572.9" width="91.6" height="86.1" fill="#65a25d" stroke="#73bf69" stroke-width="2"/>
<text x="1637.7" y="568.4" text-anchor="middle" font-size="18" textLength="24.4" lengthAdjust="spacingAndGlyphs" fill="#d8d8e4" stroke="#d8d8e4" stroke-width="0.3">119</text>
<text x="1637.7" y="685" text-anchor="middle" font-size="13" fill="#ccccdc" stroke="#ccccdc" stroke-width="0.3">204 Elizabeth Chapman</text>
<rect x="1689.5" y="573.6" width="91.6" height="85.4" fill="#65a25d" stroke="#73bf69" stroke-width="2"/>
<text x="1735.3" y="569.1" text-anchor="middle" font-size="18" textLength="24.4" lengthAdjust="spacingAndGlyphs" fill="#d8d8e4" stroke="#d8d8e4" stroke-width="0.3">118</text>
<text x="1735.3" y="685" text-anchor="middle" font-size="13" fill="#ccccdc" stroke="#ccccdc" stroke-width="0.3">207 Krista Payne</text>
<rect x="1787.2" y="573.6" width="91.6" height="85.4" fill="#65a25d" stroke="#73bf69" stroke-width="2"/>
<text x="1833.0" y="569.1" text-anchor="middle" font-size="18" textLength="24.4" lengthAdjust="spacingAndGlyphs" fill="#d8d8e4" stroke="#d8d8e4" stroke-width="0.3">118</text>
<text x="1833.0" y="685" text-anchor="middle" font-size="13" fill="#ccccdc" stroke="#ccccdc" stroke-width="0.3">208 Michael Parks</text>
<rect x="1884.8" y="574.4" width="91.6" height="84.6" fill="#65a25d" stroke="#73bf69" stroke-width="2"/>
<text x="1930.6" y="569.9" text-anchor="middle" font-size="18" textLength="23.8" lengthAdjust="spacingAndGlyphs" fill="#d8d8e4" stroke="#d8d8e4" stroke-width="0.3">117</text>
<text x="1930.6" y="685" text-anchor="middle" font-size="13" fill="#ccccdc" stroke="#ccccdc" stroke-width="0.3">209 Victoria Le</text>
<rect x="1982.4" y="575.1" width="91.6" height="83.9" fill="#65a25d" stroke="#73bf69" stroke-width="2"/>
<text x="2028.3" y="570.6" text-anchor="middle" font-size="18" textLength="24.4" lengthAdjust="spacingAndGlyphs" fill="#d8d8e4" stroke="#d8d8e4" stroke-width="0.3">116</text>
<text x="2028.3" y="685" text-anchor="middle" font-size="13" fill="#ccccdc" stroke="#ccccdc" stroke-width="0.3">203 David Conner</text>
<rect x="2080.1" y="575.8" width="91.6" height="83.2" fill="#65a25d" stroke="#73bf69" stroke-width="2"/>
<text x="2125.9" y="571.3" text-anchor="middle" font-size="18" textLength="23.8" lengthAdjust="spacingAndGlyphs" fill="#d8d8e4" stroke="#d8d8e4" stroke-width="0.3">115</text>
<text x="2125.9" y="685" text-anchor="middle" font-size="13" fill="#ccccdc" stroke="#ccccdc" stroke-width="0.3">206 Debbie George</text>
<rect x="2177.7" y="576.6" width="91.6" height="82.4" fill="#65a25d" stroke="#73bf69" stroke-width="2"/>
<text x="2223.5" y="572.1" text-anchor="middle" font-size="18" textLength="24.4" lengthAdjust="spacingAndGlyphs" fill="#d8d8e4" stroke="#d8d8e4" stroke-width="0.3">114</text>
<text x="2223.5" y="685" text-anchor="middle" font-size="13" fill="#ccccdc" stroke="#ccccdc" stroke-width="0.3">205 Mary Robinson</text>
<rect x="2275.4" y="579.5" width="91.6" height="79.5" fill="#65a25d" stroke="#73bf69" stroke-width="2"/>
<text x="2321.2" y="575.0" text-anchor="middle" font-size="18" textLength="25.4" lengthAdjust="spacingAndGlyphs" fill="#d8d8e4" stroke="#d8d8e4" stroke-width="0.3">110</text>
<text x="2321.2" y="685" text-anchor="middle" font-size="13" fill="#ccccdc" stroke="#ccccdc" stroke-width="0.3">202 Joshua Griffith</text>
</svg>
</div></body></html>
